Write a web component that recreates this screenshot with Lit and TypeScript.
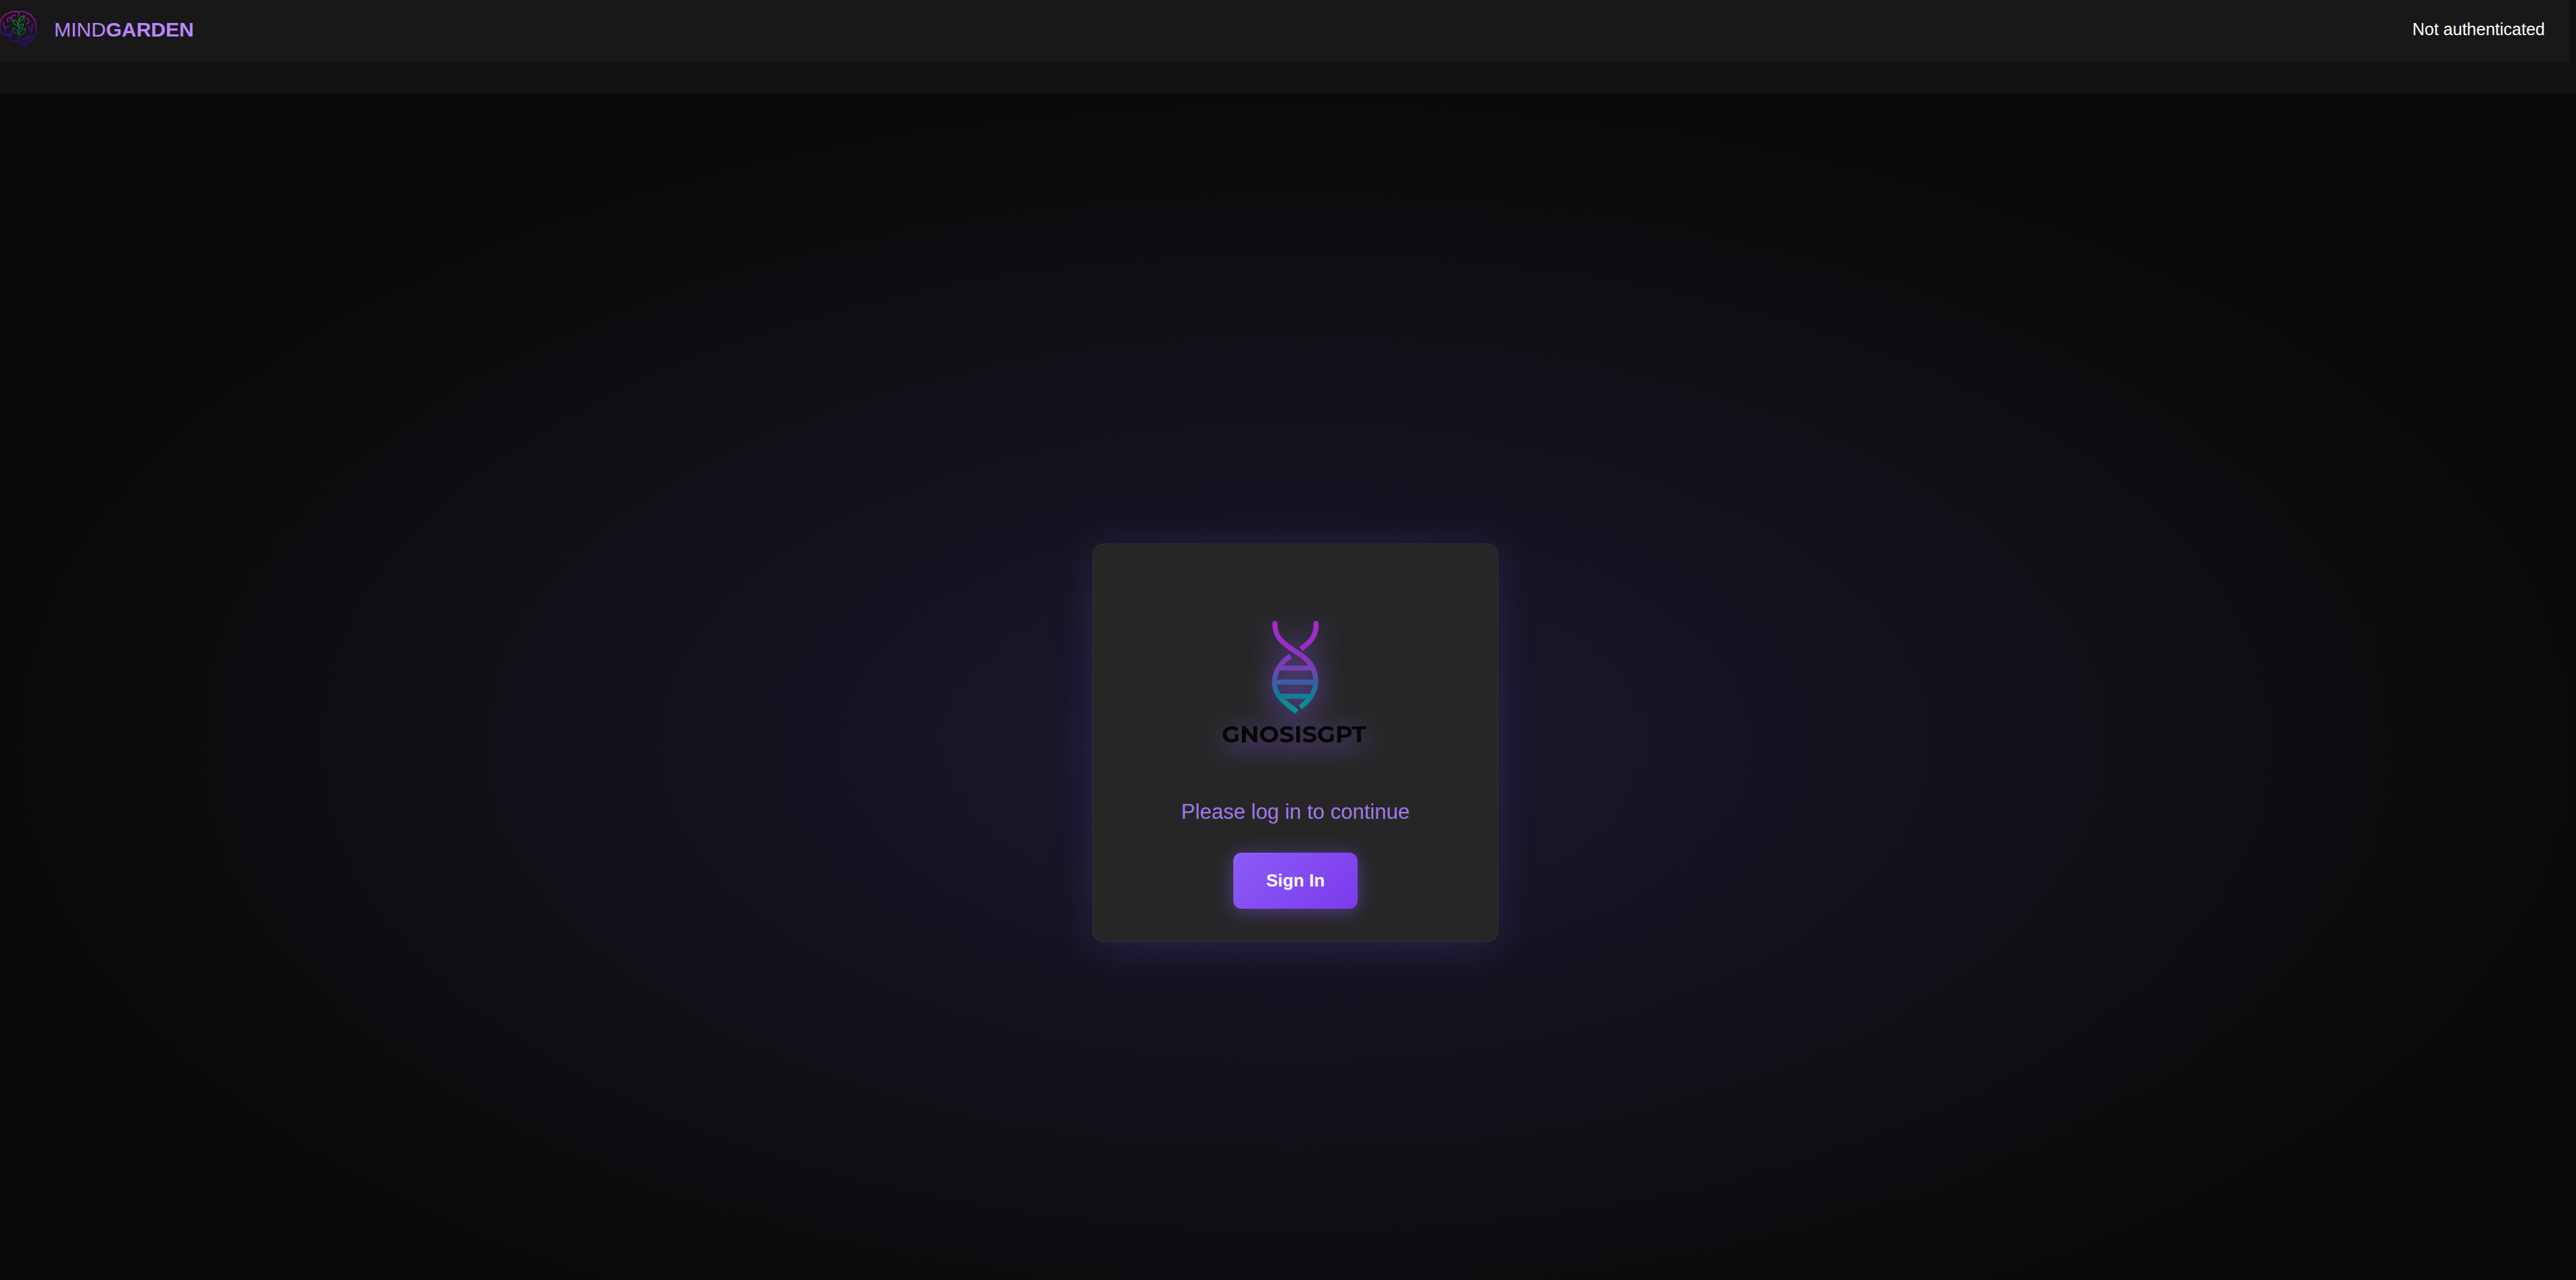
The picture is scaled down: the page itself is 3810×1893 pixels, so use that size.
import { LitElement, html, css } from "lit";
import { customElement } from "lit/decorators.js";

@customElement("brand-mark")
class BrandMark extends LitElement {
  static styles = css`
    :host { display: block; width: 56px; height: 56px; }
    .mark { display: block; width: 100%; height: 100%; fill: none; stroke-linecap: round; stroke-linejoin: round; }
  `;
  render() {
    return html`<svg class="mark" viewBox="0 0 168 168" aria-hidden="true">
      <defs>
        <linearGradient id="brain" gradientUnits="userSpaceOnUse" x1="0" y1="0" x2="0" y2="168">
          <stop offset="0" stop-color="#a80a98" /><stop offset="0.3" stop-color="#820c96" />
          <stop offset="0.6" stop-color="#400a9c" /><stop offset="1" stop-color="#22078c" />
        </linearGradient>
        <linearGradient id="plant" gradientUnits="userSpaceOnUse" x1="0" y1="22" x2="0" y2="130">
          <stop offset="0" stop-color="#129022" /><stop offset="0.45" stop-color="#0e6c38" />
          <stop offset="1" stop-color="#103a4a" />
        </linearGradient>
      </defs>
      <g stroke="url(#brain)" stroke-width="5">
        <path d="M83 24V8Q76 0 62 4Q46 2 36 12Q22 14 17 24Q4 32 3 46Q-3 58 0 72Q-2 92 10 98Q20 110 34 107Q44 116 54 106" />
        <path d="M83 8Q90 0 102 4Q118 4 126 14Q140 16 144 30Q158 40 156 54Q160 66 158 76Q166 88 160 104Q156 112 150 113Q152 124 138 130Q128 144 112 138L110 162L94 144Q90 134 83 132Q70 138 60 132Q42 132 40 118Q38 106 50 98M50 98Q54 96 52 92" />
        <path d="M68 20Q54 18 54 30Q36 26 32 38Q30 46 38 48M54 30Q46 36 48 42" />
        <path d="M14 50Q14 70 26 76Q30 68 42 70M26 76Q18 84 24 90" />
        <path d="M118 32Q130 38 128 50Q126 58 116 58M108 44V46" />
        <path d="M142 62Q148 76 136 84Q126 80 128 70M136 84Q134 92 142 92" />
        <path d="M150 113Q140 116 134 112M130 120Q130 112 120 110M128 122Q108 120 98 132" />
      </g>
      <g stroke="url(#plant)" stroke-width="4">
        <path d="M83 132V36" />
        <path d="M85 46Q86 24 108 22Q108 42 85 46Z" /><path d="M82 66Q58 62 56 40Q80 42 82 66Z" />
        <path d="M85 80Q86 62 104 58Q106 76 85 80Z" /><path d="M82 104Q56 100 56 76Q80 78 82 104Z" />
        <path d="M84 108Q86 84 114 78Q112 106 84 108Z" />
      </g>
    </svg>`;
  }
}

@customElement("gnosis-logo")
class GnosisLogo extends LitElement {
  static styles = css`
    :host { display: block; width: 250px; height: 250px; filter: drop-shadow(0 8px 20px rgba(139, 92, 246, 0.8)); }
    .logo { display: block; width: 100%; height: 100%; }
    .strands { fill: none; stroke: url(#dna); stroke-width: 7.5; }
    .tips { fill: #a62bd2; }
    .word { font: 700 35px Montserrat, Lato, "Liberation Sans", sans-serif; fill: #050705; }
  `;
  render() {
    return html`<svg class="logo" viewBox="0 0 250 250" role="img" aria-label="GnosisGPT">
      <defs>
        <linearGradient id="dna" gradientUnits="userSpaceOnUse" x1="0" y1="48" x2="0" y2="186">
          <stop offset="0" stop-color="#a62bd2" /><stop offset="0.3" stop-color="#9a2cc9" />
          <stop offset="0.52" stop-color="#7540b2" /><stop offset="0.65" stop-color="#3d5ca6" />
          <stop offset="0.82" stop-color="#127e98" /><stop offset="1" stop-color="#079a8c" />
        </linearGradient>
      </defs>
      <g class="tips"><circle cx="94.7" cy="53" r="3.75" /><circle cx="155.5" cy="53" r="3.75" /></g>
      <g class="strands">
        <path d="M94.7 53C94 71 104 80 117.3 89.3C131 98.5 144 105 150.7 119C160 139 155 161 132 177" />
        <path d="M155.5 53C156.5 70 148 81 133 90.5" />
        <path d="M118 101C88 121 88 151 108 168Q116 176 127.5 183.5" />
        <path d="M102 119H149M95 139.7H155M102 160.7H148" />
      </g>
      <text class="word" x="123" y="229" text-anchor="middle">GNOSISGPT</text>
    </svg>`;
  }
}

@customElement("app-root")
class AppRoot extends LitElement {
  static styles = css`
    :host { display: block; height: 100vh; overflow: hidden; background: #0a0a0a; font-family: "Liberation Sans", Arial, sans-serif; }
    .top { background: #121212; padding: 0 10px 48px 0; }
    .bar { display: flex; align-items: center; justify-content: space-between; box-sizing: border-box; height: 91px; padding: 0 36px 4px 0; background: #181818; }
    .brand { display: flex; align-items: center; gap: 24px; color: #bb86fc; font-size: 30px; text-decoration: none; }
    .status { color: #fff; font-size: 25px; }
    .stage { display: flex; align-items: center; justify-content: center; min-height: calc(100vh + 26px); margin-right: -22px; background: radial-gradient(ellipse at center, #1a1a2e 0%, #0a0a0a 70%); }
    .card { box-sizing: border-box; width: 600px; display: flex; flex-direction: column; align-items: center; padding: 64px 48px 48px; background: #262626; border: 1px solid #333; border-radius: 16px; box-shadow: 0 8px 60px rgba(139, 92, 246, 0.18); }
    .prompt { margin: 62px 0 40px; color: #9f7aea; font-size: 31px; line-height: 40px; }
    .sign { width: 184px; height: 83px; border: 0; border-radius: 12px; color: #fff; background: linear-gradient(135deg, #8b5cf6, #7c3aed); box-shadow: 0 4px 30px rgba(139, 92, 246, 0.45); font: bold 26px "Liberation Sans", Arial, sans-serif; }
  `;
  render() {
    return html`
      <header class="top"><div class="bar">
        <a class="brand" href="#"><brand-mark></brand-mark><span>MIND<b>GARDEN</b></span></a>
        <span class="status">Not authenticated</span>
      </div></header>
      <main class="stage"><section class="card">
        <gnosis-logo></gnosis-logo>
        <p class="prompt">Please log in to continue</p>
        <button class="sign" type="button">Sign In</button>
      </section></main>`;
  }
}
